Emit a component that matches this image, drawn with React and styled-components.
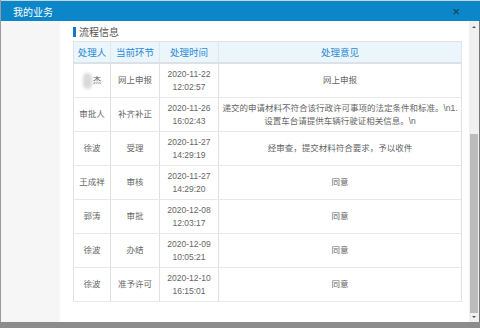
import React from "react";
import styled, { createGlobalStyle } from "styled-components";

const Global = createGlobalStyle`
  html, body { margin: 0; padding: 0; background: #8c8c8c; }
  body { font-family: "Liberation Sans", "Noto Sans CJK SC", sans-serif; }
`;

const Modal = styled.div`
  width: 480px;
  height: 322px;
  display: flex;
  flex-direction: column;
  background: #fff;
  border-left: 1px solid #9a9a9a;
  box-sizing: border-box;
`;

const Header = styled.div`
  height: 21px;
  border-top: 1px solid #c9d6de;
  box-sizing: border-box;
  background: #0b86c8;
  display: flex;
  align-items: center;
  justify-content: space-between;
  padding: 0 20px 0 12px;
`;

const Title = styled.span`
  color: #fff;
  font-size: 10px;
`;

const Close = styled.span`
  color: #22344a;
  font-size: 13px;
  line-height: 1;
`;

const Body = styled.div`
  flex: 1;
  display: flex;
  min-height: 0;
`;

const Gutter = styled.div`
  width: 59px;
  background: #f6f6f6;
`;

const Content = styled.div`
  width: 409px;
  background: #fff;
  padding: 4px 12px 0 13px;
  box-sizing: border-box;
`;

const SectionTitle = styled.div`
  display: flex;
  align-items: center;
  gap: 3px;
  height: 11px;
  margin: 0 0 4px 0;
  padding-top: 1px;
  font-size: 10px;
  color: #555;
`;

const Bar = styled.span`
  width: 3px;
  height: 10px;
  background: #1279c9;
`;

const Table = styled.table`
  width: 384px;
  border-collapse: collapse;
  table-layout: fixed;
  border: 1px solid #e2e2e2;
`;

const Th = styled.th`
  width: ${(p) => p.$w}px;
  height: 20px;
  padding: 0;
  background: #ebf5fc;
  color: #2a8ad4;
  font-size: 9.5px;
  font-weight: normal;
  border-right: 1px solid #e0e6ea;
  border-bottom: 2px solid #dbe2e7;
`;

const Td = styled.td`
  padding: 4px 3px;
  text-align: center;
  font-size: 8.5px;
  line-height: 12.5px;
  color: #666;
  border-right: 1px solid #e0e0e0;
  border-bottom: 1px solid #e8e8e8;
  word-break: break-all;
`;

const Blur = styled.span`
  display: inline-block;
  width: 9px;
  height: 16px;
  margin-right: 1px;
  vertical-align: middle;
  border-radius: 5px;
  background: #d9d9d9;
  filter: blur(1.5px);
`;

const Scroll = styled.div`
  width: 10px;
  background: #f0f0f0;
  display: flex;
  flex-direction: column;
  align-items: center;
  border-right: 1px solid #777;
`;

const Arrow = styled.div`
  width: 0;
  height: 0;
  margin: ${(p) => (p.$down ? "3px 0 4px" : "5px 0 0")};
  border-left: 2px solid transparent;
  border-right: 2px solid transparent;
  ${(p) => (p.$down ? "border-top: 2px solid #555;" : "border-bottom: 2px solid #555;")}
`;

const Track = styled.div`
  flex: 1;
  width: 100%;
  display: flex;
  flex-direction: column;
  align-items: center;
`;

const Thumb = styled.div`
  margin-top: 106px;
  flex: 1;
  width: 8px;
  background: #bcbcbc;
`;

const rows = [
  { name: "杰", blur: true, step: "网上申报", d: "2020-11-22", t: "12:02:57", c: "网上申报" },
  {
    name: "审批人",
    step: "补齐补正",
    d: "2020-11-26",
    t: "16:02:43",
    c: "递交的申请材料不符合该行政许可事项的法定条件和标准。\\n1.设置车台请提供车辆行驶证相关信息。\\n",
  },
  { name: "徐波", step: "受理", d: "2020-11-27", t: "14:29:19", c: "经审查，提交材料符合要求，予以收件" },
  { name: "王成祥", step: "审核", d: "2020-11-27", t: "14:29:20", c: "同意" },
  { name: "郭涛", step: "审批", d: "2020-12-08", t: "12:03:17", c: "同意" },
  { name: "徐波", step: "办结", d: "2020-12-09", t: "10:05:21", c: "同意" },
  { name: "徐波", step: "准予许可", d: "2020-12-10", t: "16:15:01", c: "同意" },
];

export default function App() {
  return (
    <>
      <Global />
      <Modal>
        <Header>
          <Title>我的业务</Title>
          <Close>×</Close>
        </Header>
        <Body>
          <Gutter />
          <Content>
            <SectionTitle>
              <Bar />
              流程信息
            </SectionTitle>
            <Table>
              <thead>
                <tr>
                  <Th $w={36}>处理人</Th>
                  <Th $w={48}>当前环节</Th>
                  <Th $w={58}>处理时间</Th>
                  <Th $w={242}>处理意见</Th>
                </tr>
              </thead>
              <tbody>
                {rows.map((r, i) => (
                  <tr key={i}>
                    <Td>
                      {r.blur && <Blur />}
                      {r.name}
                    </Td>
                    <Td>{r.step}</Td>
                    <Td>
                      {r.d}
                      <br />
                      {r.t}
                    </Td>
                    <Td>{r.c}</Td>
                  </tr>
                ))}
              </tbody>
            </Table>
          </Content>
          <Scroll>
            <Arrow />
            <Track>
              <Thumb />
            </Track>
            <Arrow $down />
          </Scroll>
        </Body>
      </Modal>
    </>
  );
}
